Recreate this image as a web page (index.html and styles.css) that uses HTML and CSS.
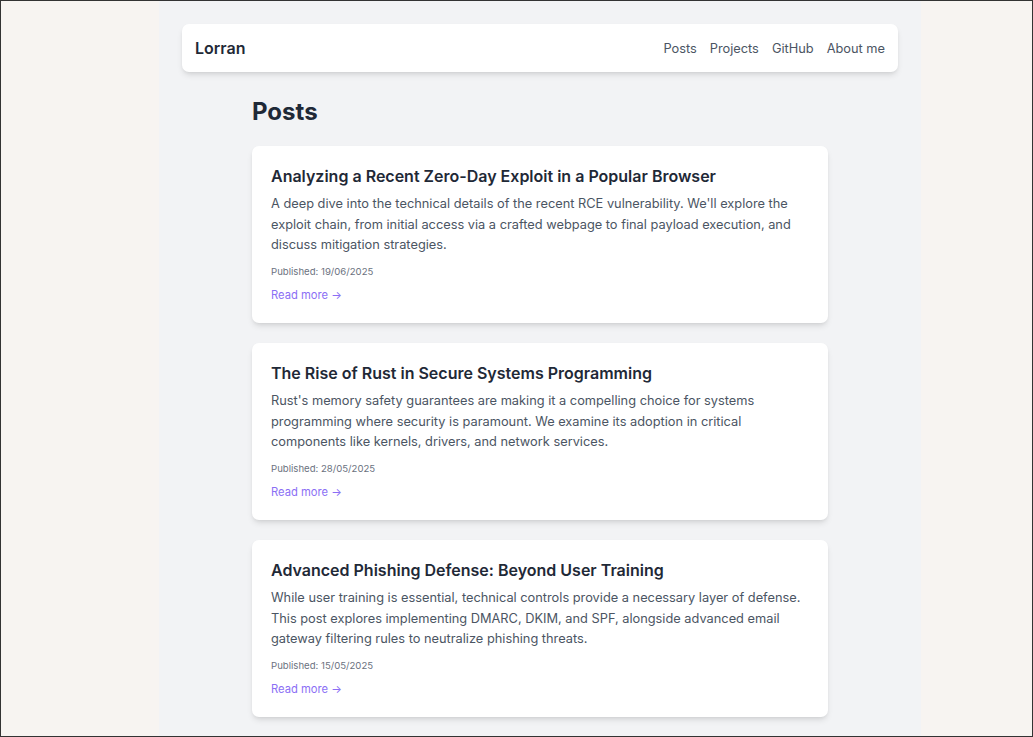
FILE: index.html
```html
<!DOCTYPE html>
<html lang="en">
<head>
<meta charset="utf-8">
<title>Lorran</title>
<link rel="stylesheet" href="styles.css">
</head>
<body>
<div class="frame">
  <div class="column">
    <header class="topbar">
      <a class="brand" href="#">Lorran</a>
      <nav class="nav">
        <a href="#">Posts</a>
        <a href="#">Projects</a>
        <a href="#">GitHub</a>
        <a href="#">About me</a>
      </nav>
    </header>
    <main class="content">
      <h1 class="page-title">Posts</h1>
      <article class="card">
        <h2 class="card-title">Analyzing a Recent Zero-Day Exploit in a Popular Browser</h2>
        <p class="card-text">A deep dive into the technical details of the recent RCE vulnerability. We'll explore the exploit chain, from initial access via a crafted webpage to final payload execution, and discuss mitigation strategies.</p>
        <p class="card-date">Published: 19/06/2025</p>
        <a class="card-link" href="#">Read more →</a>
      </article>
      <article class="card">
        <h2 class="card-title">The Rise of Rust in Secure Systems Programming</h2>
        <p class="card-text">Rust's memory safety guarantees are making it a compelling choice for systems programming where security is paramount. We examine its adoption in critical components like kernels, drivers, and network services.</p>
        <p class="card-date">Published: 28/05/2025</p>
        <a class="card-link" href="#">Read more →</a>
      </article>
      <article class="card">
        <h2 class="card-title">Advanced Phishing Defense: Beyond User Training</h2>
        <p class="card-text">While user training is essential, technical controls provide a necessary layer of defense. This post explores implementing DMARC, DKIM, and SPF, alongside advanced email gateway filtering rules to neutralize phishing threats.</p>
        <p class="card-date">Published: 15/05/2025</p>
        <a class="card-link" href="#">Read more →</a>
      </article>
    </main>
  </div>
</div>
</body>
</html>
```
FILE: styles.css
```css
html, body {
  margin: 0;
  padding: 0;
  overflow: hidden;
}
body {
  font-family: Inter, "Noto Sans", sans-serif;
  background: #f7f4f1;
}
.frame {
  box-sizing: border-box;
  width: 1033px;
  height: 737px;
  border: 1px solid #333333;
  background: #f7f4f1;
  overflow: hidden;
  display: flex;
}
.column {
  margin-left: 158px;
  width: 762px;
  min-height: 100%;
  background: #f2f3f5;
  padding: 23px 23px 0;
  box-sizing: border-box;
}
.topbar {
  height: 48px;
  background: #ffffff;
  border-radius: 7px;
  box-shadow: 0 4px 6px -1px rgba(0,0,0,0.1), 0 2px 4px -2px rgba(0,0,0,0.1);
  display: flex;
  align-items: center;
  justify-content: space-between;
  padding: 0 13px;
}
.brand {
  font-size: 16px;
  font-weight: 600;
  color: #1f2937;
  text-decoration: none;
}
.nav {
  display: flex;
  gap: 13px;
}
.nav a {
  font-size: 12.8px;
  color: #4b5563;
  text-decoration: none;
}
.content {
  width: 576px;
  margin: 0 auto;
  padding-top: 24px;
}
.page-title {
  margin: 0 0 18px;
  font-size: 24px;
  line-height: 32px;
  font-weight: 700;
  color: #1f2937;
}
.card {
  background: #ffffff;
  border-radius: 7px;
  box-shadow: 0 4px 6px -1px rgba(0,0,0,0.1), 0 2px 4px -2px rgba(0,0,0,0.1);
  padding: 20px 19px 20px;
  margin-bottom: 20px;
  height: 177px;
  box-sizing: border-box;
}
.card-title {
  margin: 0 0 7px;
  font-size: 16px;
  line-height: 21px;
  font-weight: 600;
  color: #1f2937;
}
.card-text {
  margin: 0;
  font-size: 12.8px;
  line-height: 20.5px;
  color: #4b5563;
}
.card-date {
  margin: 9px 0 0;
  font-size: 9.6px;
  line-height: 13.6px;
  color: #6b7280;
}
.card-link {
  display: inline-block;
  margin-top: 9px;
  font-size: 11.2px;
  line-height: 17px;
  color: #8b6ff5;
  text-decoration: none;
}
```
